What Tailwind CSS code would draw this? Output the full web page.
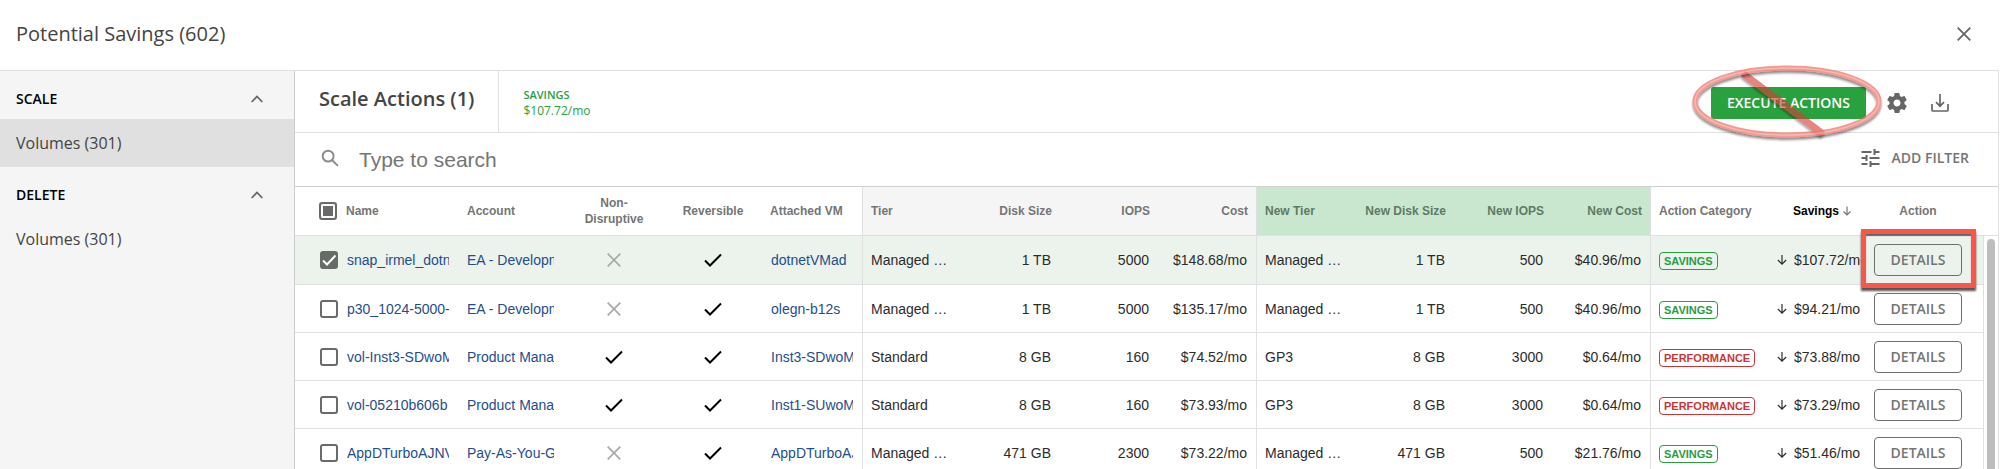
<!DOCTYPE html>
<html lang="en">
<head>
<meta charset="utf-8">
<title>Potential Savings</title>
<script src="https://cdn.jsdelivr.net/npm/@tailwindcss/browser@4"></script>
</head>
<body class="flex h-screen flex-col overflow-hidden bg-white font-['Open_Sans',sans-serif] text-[#444]">
  <header class="flex h-[70px] shrink-0 items-center justify-between pb-[3px] pl-4 pr-[36px]">
    <h1 class="text-xl">Potential Savings (602)</h1>
    <button type="button" aria-label="Close" class="p-[3px]">
      <svg class="size-[14px]" viewBox="0 0 14 14" fill="none" stroke="#666" stroke-width="1.8"><path d="M.7.7l12.600 12.600M13.300.7L.7 13.300"/></svg>
    </button>
  </header>

  <div class="mr-[11px] flex min-h-0 flex-1 border-r border-t border-[#e0e0e0]">
    <nav class="w-[295px] shrink-0 border-r border-[#ccc] bg-[#f5f5f5]">
      <button type="button" aria-expanded="true" class="flex h-12 w-full items-center justify-between pl-4 pr-[31px] pt-2 text-sm font-semibold text-black">SCALE
        <svg class="h-2 w-3" viewBox="0 0 12 8" fill="none" stroke="#666" stroke-width="1.8"><path d="M.7 7L6 1.500 11.300 7"/></svg>
      </button>
      <a href="#" class="flex h-12 items-center bg-[#e0e0e0] px-4 text-base">Volumes (301)</a>
      <button type="button" aria-expanded="true" class="flex h-12 w-full items-center justify-between pl-4 pr-[31px] pt-2 text-sm font-semibold text-black">DELETE
        <svg class="h-2 w-3" viewBox="0 0 12 8" fill="none" stroke="#666" stroke-width="1.8"><path d="M.7 7L6 1.500 11.300 7"/></svg>
      </button>
      <a href="#" class="flex h-12 items-center px-4 text-base">Volumes (301)</a>
    </nav>

    <main class="min-w-0 flex-1">
      <div class="flex h-[62px] items-stretch border-b border-[#e0e0e0]">
        <h2 class="flex items-center border-r border-[#e0e0e0] pb-[6px] pl-6 pr-6 text-xl font-semibold">Scale Actions (1)</h2>
        <div class="flex flex-1 flex-col justify-center pl-6 pt-[2px] text-[#2a9d3f]">
          <div class="text-[11px] leading-4 font-semibold">SAVINGS</div>
          <div class="text-xs leading-4">$107.72/mo</div>
        </div>
        <div class="flex items-center pr-[49px] pt-[2px]">
          <div class="relative">
            <button type="button" class="block h-8 w-[155px] rounded-[3px] bg-[#2aa13f] text-sm font-semibold text-white">EXECUTE ACTIONS</button>
            <svg class="pointer-events-none absolute -left-[22px] -top-[25px] h-[84px] w-[200px]" viewBox="0 0 200 84" fill="none">
              <defs><filter id="soft" x="-10%" y="-20%" width="120%" height="150%"><feDropShadow dx="0" dy="2.500" stdDeviation="1.300" flood-color="#000" flood-opacity=".6"/></filter></defs>
              <g filter="url(#soft)" opacity=".62">
                <path d="M54 11.500L134 72" stroke="#d83a30" stroke-width="7"/>
              </g>
              <g filter="url(#soft)" opacity=".75">
                <ellipse cx="98" cy="39.500" rx="92" ry="33.500" stroke="#ee776e" stroke-width="5"/>
                <ellipse cx="98" cy="39.500" rx="92" ry="33.500" stroke="#f9a098" stroke-width="1.500"/>
              </g>
            </svg>
          </div>
          <button type="button" aria-label="Settings" class="ml-[19px]">
            <svg class="size-6" viewBox="0 0 24 24" fill="#666"><path d="M19.430 12.980c.04-.32.070-.64.070-.98s-.03-.66-.07-.98l2.110-1.650c.19-.15.240-.42.120-.64l-2-3.460c-.12-.22-.39-.3-.61-.22l-2.490 1c-.52-.4-1.080-.73-1.690-.98l-.38-2.650A.488.488 0 0 0 14 2h-4c-.25 0-.46.180-.49.420l-.38 2.650c-.61.250-1.170.590-1.690.980l-2.490-1c-.23-.09-.49 0-.61.220l-2 3.460c-.13.220-.07.490.120.640l2.110 1.650c-.04.320-.07.650-.07.980s.03.660.070.980l-2.110 1.650c-.19.150-.24.420-.12.640l2 3.460c.12.220.390.300.610.220l2.490-1c.52.400 1.080.730 1.690.980l.38 2.650c.03.240.240.420.490.420h4c.25 0 .46-.18.490-.42l.38-2.650c.61-.25 1.170-.59 1.690-.98l2.490 1c.23.090.490 0 .610-.22l2-3.460c.12-.22.070-.49-.12-.64l-2.110-1.650zM12 15.500c-1.930 0-3.500-1.570-3.500-3.500s1.570-3.500 3.500-3.500 3.500 1.570 3.500 3.500-1.570 3.500-3.500 3.500z"/></svg>
          </button>
          <button type="button" aria-label="Download" class="ml-[22px]">
            <svg class="h-[18px] w-[18px]" viewBox="0 0 18 18" fill="none" stroke="#666" stroke-width="1.700"><path d="M1 10v6q0 1 1 1h14q1 0 1-1v-6M9 0v12M5 8.200l4 4 4-4"/></svg>
          </button>
        </div>
      </div>

      <div class="flex h-[54px] items-center border-b border-[#d0d0d0] pl-[26px] pr-[29px]">
        <label for="search" aria-label="Search" class="mb-[2px]">
          <svg class="size-[19px]" viewBox="0 0 20 20" fill="none" stroke="#8a8a8a" stroke-width="2"><circle cx="7.500" cy="7.500" r="5.700"/><path d="M11.800 11.800l6 6"/></svg>
        </label>
        <input id="search" type="search" placeholder="Type to search" class="ml-[19px] min-w-0 flex-1 font-['Liberation_Sans',Arial,sans-serif] text-[21px] outline-none placeholder:text-[#757575]">
        <button type="button" class="flex items-center gap-[12px] pb-[3px] text-sm font-semibold text-[#757575]">
          <svg class="h-[18px] w-[19px]" viewBox="0 0 18 18" fill="#666"><path d="M0 14v2h6v-2H0zM0 2v2h10V2H0zm10 16v-2h8v-2h-8v-2H8v6h2zM4 6v2H0v2h4v2h2V6H4zm14 4V8H8v2h10zm-6-4h2V4h4V2h-4V0h-2v6z"/></svg>
          ADD FILTER
        </button>
      </div>

      <div class="relative font-['Liberation_Sans',Arial,sans-serif]">
        <table class="w-full table-fixed border-separate border-spacing-0 text-sm text-[#2b2b2b]">
          <colgroup>
            <col class="w-[43px]"><col class="w-[120px]"><col class="w-[106px]"><col class="w-[100px]"><col class="w-[98px]"><col class="w-[100px]">
            <col class="w-[99px]"><col class="w-[99px]"><col class="w-[98px]"><col class="w-[98px]">
            <col class="w-[99px]"><col class="w-[99px]"><col class="w-[98px]"><col class="w-[98px]">
            <col class="w-[118px]"><col class="w-[102px]"><col class="w-[113px]"><col class="w-[15px]">
          </colgroup>
          <thead>
            <tr class="h-[49px] text-left text-xs text-[#757575] *:border-b *:border-[#e0e0e0]">
              <th class="pl-6">
                <input type="checkbox" aria-label="Select all" class="block size-[18px] appearance-none rounded-[3px] border-2 border-[#6a6a6a] bg-[#6a6a6a] shadow-[inset_0_0_0_2px_white]">
              </th>
              <th class="px-2">Name</th>
              <th class="px-[9px]">Account</th>
              <th class="px-2 text-center">Non-<br>Disruptive</th>
              <th class="px-2 text-center">Reversible</th>
              <th class="px-2">Attached VM</th>
              <th class="border-l bg-[#f5f5f5] px-2">Tier</th>
              <th class="bg-[#f5f5f5] px-2 text-right">Disk Size</th>
              <th class="bg-[#f5f5f5] px-2 text-right">IOPS</th>
              <th class="bg-[#f5f5f5] px-2 text-right">Cost</th>
              <th class="border-l bg-[#c9e7cf] px-2 text-[#5f7a65]">New Tier</th>
              <th class="bg-[#c9e7cf] px-2 text-right whitespace-nowrap text-[#5f7a65]">New Disk Size</th>
              <th class="bg-[#c9e7cf] px-2 text-right text-[#5f7a65]">New IOPS</th>
              <th class="bg-[#c9e7cf] px-2 text-right text-[#5f7a65]">New Cost</th>
              <th class="border-l px-2">Action Category</th>
              <th class="pl-[25px] text-black">
                <span class="flex items-center gap-[3px]">Savings
                  <svg class="size-[10px]" viewBox="0 0 10 10" fill="none" stroke="#777" stroke-width="1.200"><path d="M5 .5v8.500M1.500 5.500L5 9l3.500-3.500"/></svg>
                </span>
              </th>
              <th class="pr-[17px] text-center">Action</th>
              <th></th>
            </tr>
          </thead>
          <tbody id="rows"></tbody>
        </table>
        <div class="absolute right-[3px] top-[52px] h-[600px] w-2 rounded-full bg-[#bdbdbd]"></div>
      </div>
    </main>
  </div>

  <script>
    const data = [
      ["snap_irmel_dotnet", "EA - Development", 0, "dotnetVMad", "Managed …", "1 TB", "5000", "$148.68/mo", "Managed …", "1 TB", "500", "$40.96/mo", "SAVINGS", "$107.72/mo"],
      ["p30_1024-5000-disk", "EA - Development", 0, "olegn-b12s", "Managed …", "1 TB", "5000", "$135.17/mo", "Managed …", "1 TB", "500", "$40.96/mo", "SAVINGS", "$94.21/mo"],
      ["vol-Inst3-SDwoMem", "Product Management", 1, "Inst3-SDwoMem", "Standard", "8 GB", "160", "$74.52/mo", "GP3", "8 GB", "3000", "$0.64/mo", "PERFORMANCE", "$73.88/mo"],
      ["vol-05210b606b", "Product Management", 1, "Inst1-SUwoMem", "Standard", "8 GB", "160", "$73.93/mo", "GP3", "8 GB", "3000", "$0.64/mo", "PERFORMANCE", "$73.29/mo"],
      ["AppDTurboAJNVM", "Pay-As-You-Go", 0, "AppDTurboAJN", "Managed …", "471 GB", "2300", "$73.22/mo", "Managed …", "471 GB", "500", "$21.76/mo", "SAVINGS", "$51.46/mo"]
    ];
    const check = '<svg role="img" aria-label="Yes" class="mx-auto h-[14px] w-[18px]" viewBox="0 0 18 14" fill="none" stroke="#000" stroke-width="2"><path d="M1 7.500L6 12.500 17 1.500"/></svg>';
    const cross = '<svg role="img" aria-label="No" class="mx-auto size-[14px]" viewBox="0 0 14 14" fill="none" stroke="#a6aaa7" stroke-width="1.700"><path d="M.7.7l12.600 12.600M13.300.7L.7 13.300"/></svg>';
    const link = t => `<a href="#" class="block overflow-hidden whitespace-nowrap text-[#1f4e8c]">${t}</a>`;
    const tag = t => t === "SAVINGS"
      ? '<span class="inline-block h-[18px] rounded-[4px] border border-[#2a9d3f] px-1 align-middle text-[11px] leading-4 font-bold text-[#2a9d3f]">SAVINGS</span>'
      : '<span class="inline-block h-[18px] rounded-[4px] border border-[#c93636] px-1 align-middle text-[11px] leading-4 font-bold text-[#c93636]">PERFORMANCE</span>';

    document.getElementById("rows").innerHTML = data.map((r, i) => `
      <tr class="${i ? "h-12" : "h-[49px]"} whitespace-nowrap *:border-[#e0e0e0] *:not-last:border-b ${i ? "" : "*:not-last:bg-[#ecf3ed]"}">
        <td class="pl-[25px]"><span class="relative block size-[18px]">
          <input type="checkbox" aria-label="Select ${r[0]}" ${i ? "" : "checked"} class="block size-[18px] appearance-none rounded-[3px] border-2 border-[#6a6a6a] checked:border-[#666b67] checked:bg-[#666b67]">
          ${i ? "" : '<svg class="pointer-events-none absolute inset-0 size-[18px]" viewBox="0 0 18 18" fill="none" stroke="#fff" stroke-width="2"><path d="M3 9.500l4 4 8.500-9"/></svg>'}
        </span></td>
        <td class="px-[9px]">${link(r[0])}</td>
        <td class="pl-[9px] pr-[10px]">${link(r[1])}</td>
        <td>${r[2] ? check : cross}</td>
        <td>${check}</td>
        <td class="px-[9px]">${link(r[3])}</td>
        <td class="border-l px-2">${r[4]}</td>
        <td class="px-[9px] text-right">${r[5]}</td>
        <td class="px-[9px] text-right">${r[6]}</td>
        <td class="pr-[9px] text-right">${r[7]}</td>
        <td class="border-l px-2">${r[8]}</td>
        <td class="px-[9px] text-right">${r[9]}</td>
        <td class="px-[9px] text-right">${r[10]}</td>
        <td class="pr-[9px] text-right">${r[11]}</td>
        <td class="border-l px-2">${tag(r[12])}</td>
        <td class="px-[9px]"><span class="flex items-center gap-[7px] overflow-hidden">
          <svg class="size-[10px] shrink-0" viewBox="0 0 10 11" fill="none" stroke="#2b2b2b" stroke-width="1.300"><path d="M5 0v10M.5 5.500L5 10l4.500-4.500"/></svg>${r[13]}</span></td>
        <td class="relative pl-1 pr-[21px]">
          <button type="button" class="block h-8 w-full rounded-[4px] border border-[#6e6e6e] font-['Open_Sans',sans-serif] text-sm font-semibold text-[#757575]">DETAILS</button>
          ${i ? "" : '<div class="pointer-events-none absolute -left-[9px] -top-[7px] h-[59px] w-[115px] border-[5px] border-[#fb5647] shadow-[0_3px_2px_#555,inset_0_2px_1px_#666]"></div>'}
        </td>
        <td class="border-l"></td>
      </tr>`).join("");
  </script>
</body>
</html>
